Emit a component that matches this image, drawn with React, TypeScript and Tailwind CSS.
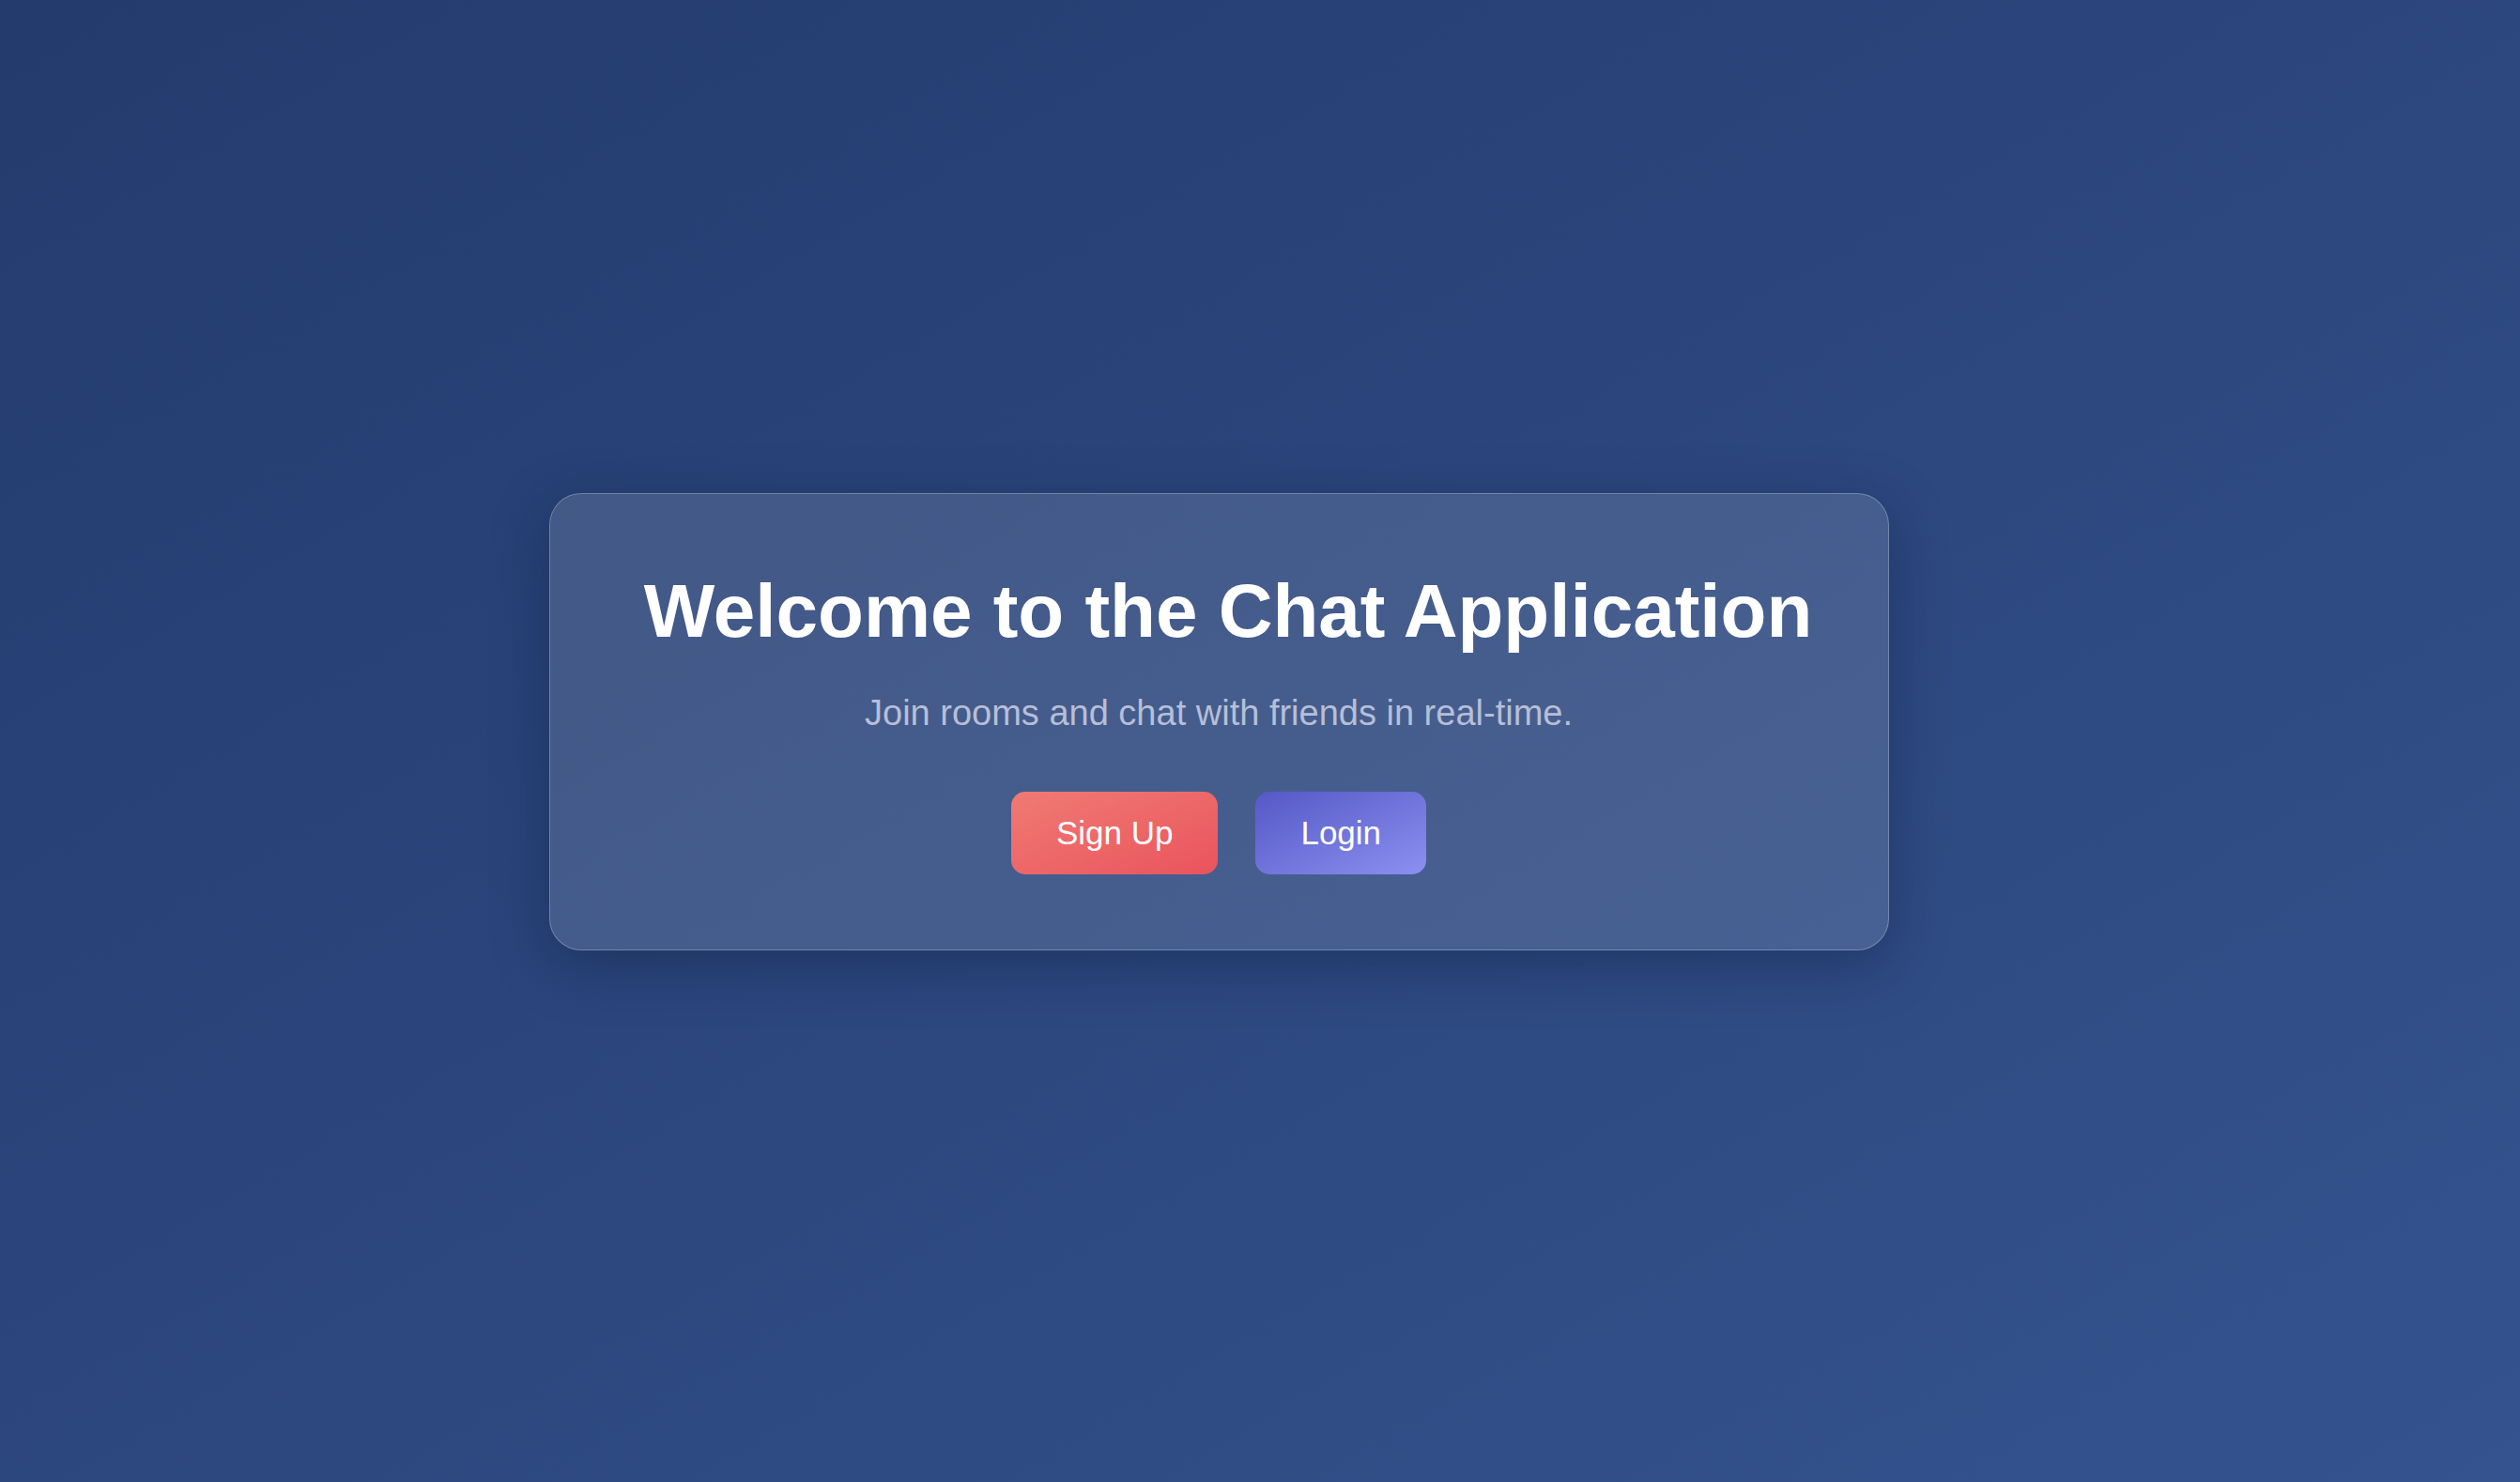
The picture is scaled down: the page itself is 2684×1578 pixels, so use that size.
export default function App() {
  return (
    <div className="flex min-h-screen w-full items-center justify-center bg-gradient-to-br from-[#243b6d] to-[#34538f] pr-[88px] pb-[41px] font-['Liberation_Sans',Arial,sans-serif]">
      <div className="flex w-[1427px] flex-col items-center rounded-[34px] border border-white/25 bg-white/[0.12] pt-[79px] pb-[80px] text-center shadow-[0_16px_60px_rgba(10,20,50,0.35)]">
        <h1 className="pl-[20px] text-[80px] font-bold leading-[1.15] text-white">Welcome to the Chat Application</h1>
        <p className="mt-[34px] text-[38px] leading-[1.5] text-[#b6bfd8]">
          Join rooms and chat with friends in real-time.
        </p>
        <div className="mt-[55px] flex gap-[40px]">
          <button className="h-[88px] rounded-[15px] bg-gradient-to-br from-[#f07a74] to-[#e9535d] px-[48px] text-[35px] text-white">
            Sign Up
          </button>
          <button className="h-[88px] rounded-[15px] bg-gradient-to-br from-[#5558c6] to-[#8c90f0] px-[48px] text-[35px] text-white">
            Login
          </button>
        </div>
      </div>
    </div>
  )
}
